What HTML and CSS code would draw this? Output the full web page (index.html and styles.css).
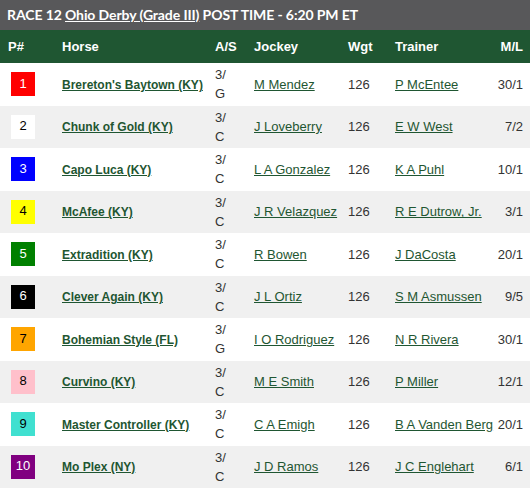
FILE: index.html
```html
<!DOCTYPE html>
<html>
<head>
<meta charset="utf-8">
<link rel="stylesheet" href="styles.css">
</head>
<body>
<div class="title">RACE 12 <a href="#" class="race-link">Ohio Derby (Grade III)</a> POST TIME - 6:20 PM ET</div>
<table class="entries">
  <colgroup>
    <col class="c-pp"><col class="c-horse"><col class="c-as"><col class="c-jockey"><col class="c-wgt"><col class="c-trainer"><col class="c-ml">
  </colgroup>
  <thead>
    <tr><th class="pp">P#</th><th>Horse</th><th>A/S</th><th>Jockey</th><th>Wgt</th><th>Trainer</th><th class="ml">M/L</th></tr>
  </thead>
  <tbody>
    <tr><td class="pp"><span class="cloth s1">1</span></td><td><a href="#" class="horse">Brereton's Baytown (KY)</a></td><td class="as">3/<br>G</td><td><a href="#">M Mendez</a></td><td>126</td><td><a href="#">P McEntee</a></td><td class="ml">30/1</td></tr>
    <tr><td class="pp"><span class="cloth s2">2</span></td><td><a href="#" class="horse">Chunk of Gold (KY)</a></td><td class="as">3/<br>C</td><td><a href="#">J Loveberry</a></td><td>126</td><td><a href="#">E W West</a></td><td class="ml">7/2</td></tr>
    <tr><td class="pp"><span class="cloth s3">3</span></td><td><a href="#" class="horse">Capo Luca (KY)</a></td><td class="as">3/<br>C</td><td><a href="#">L A Gonzalez</a></td><td>126</td><td><a href="#">K A Puhl</a></td><td class="ml">10/1</td></tr>
    <tr><td class="pp"><span class="cloth s4">4</span></td><td><a href="#" class="horse">McAfee (KY)</a></td><td class="as">3/<br>C</td><td><a href="#">J R Velazquez</a></td><td>126</td><td><a href="#">R E Dutrow, Jr.</a></td><td class="ml">3/1</td></tr>
    <tr><td class="pp"><span class="cloth s5">5</span></td><td><a href="#" class="horse">Extradition (KY)</a></td><td class="as">3/<br>C</td><td><a href="#">R Bowen</a></td><td>126</td><td><a href="#">J DaCosta</a></td><td class="ml">20/1</td></tr>
    <tr><td class="pp"><span class="cloth s6">6</span></td><td><a href="#" class="horse">Clever Again (KY)</a></td><td class="as">3/<br>C</td><td><a href="#">J L Ortiz</a></td><td>126</td><td><a href="#">S M Asmussen</a></td><td class="ml">9/5</td></tr>
    <tr><td class="pp"><span class="cloth s7">7</span></td><td><a href="#" class="horse">Bohemian Style (FL)</a></td><td class="as">3/<br>G</td><td><a href="#">I O Rodriguez</a></td><td>126</td><td><a href="#">N R Rivera</a></td><td class="ml">30/1</td></tr>
    <tr><td class="pp"><span class="cloth s8">8</span></td><td><a href="#" class="horse">Curvino (KY)</a></td><td class="as">3/<br>C</td><td><a href="#">M E Smith</a></td><td>126</td><td><a href="#">P Miller</a></td><td class="ml">12/1</td></tr>
    <tr><td class="pp"><span class="cloth s9">9</span></td><td><a href="#" class="horse">Master Controller (KY)</a></td><td class="as">3/<br>C</td><td><a href="#">C A Emigh</a></td><td>126</td><td><a href="#">B A Vanden Berg</a></td><td class="ml">20/1</td></tr>
    <tr><td class="pp"><span class="cloth s10">10</span></td><td><a href="#" class="horse">Mo Plex (NY)</a></td><td class="as">3/<br>C</td><td><a href="#">J D Ramos</a></td><td>126</td><td><a href="#">J C Englehart</a></td><td class="ml">6/1</td></tr>
  </tbody>
</table>
</body>
</html>
```
FILE: styles.css
```css
html, body {
  margin: 0;
  padding: 0;
  background: #ffffff;
}
body {
  width: 530px;
  font-family: "Liberation Sans", Arial, sans-serif;
  font-size: 13px;
  color: #333333;
}
.title {
  height: 30px;
  line-height: 30px;
  background: #58585a;
  color: #ffffff;
  font-family: Lato, "Open Sans", sans-serif;
  font-weight: 700;
  font-size: 14px;
  letter-spacing: -0.1px;
  padding-left: 7px;
  white-space: nowrap;
}
.race-link {
  color: #ffffff;
  text-decoration: underline;
}
.entries {
  width: 530px;
  border-collapse: collapse;
  table-layout: fixed;
}
.c-pp { width: 62px; }
.c-horse { width: 153px; }
.c-as { width: 39px; }
.c-jockey { width: 94px; }
.c-wgt { width: 47px; }
.c-trainer { width: 100px; }
.c-ml { width: 35px; }
.entries th {
  background: #1f5632;
  color: #ffffff;
  font-weight: 700;
  text-align: left;
  height: 33px;
  padding: 0;
  font-size: 13px;
}
.entries th.pp { padding-left: 8px; }
.entries td {
  height: 42.5px;
  padding: 0;
  vertical-align: middle;
  white-space: nowrap;
}
.entries tbody tr:nth-child(even) td { background: #f0f0f0; }
.entries td.pp { padding-left: 11px; }
.entries .ml { text-align: right; padding-right: 7px; }
.entries td.as { line-height: 19px; }
.entries a {
  color: #1f5632;
  text-decoration: underline;
}
.entries a.horse {
  font-weight: 700;
  font-size: 12px;
}
.cloth {
  display: flex;
  align-items: center;
  justify-content: center;
  width: 24px;
  height: 24px;
  padding-bottom: 2px;
  box-sizing: border-box;
  color: #ffffff;
  font-size: 13px;
}
.s1 { background: #ff0000; }
.s2 { background: #ffffff; color: #000000; }
.s3 { background: #0000ff; }
.s4 { background: #ffff00; color: #000000; }
.s5 { background: #008000; }
.s6 { background: #000000; }
.s7 { background: #ffa500; color: #000000; }
.s8 { background: #ffc0cb; color: #000000; }
.s9 { background: #40e0d0; color: #000000; }
.s10 { background: #800080; }
```
